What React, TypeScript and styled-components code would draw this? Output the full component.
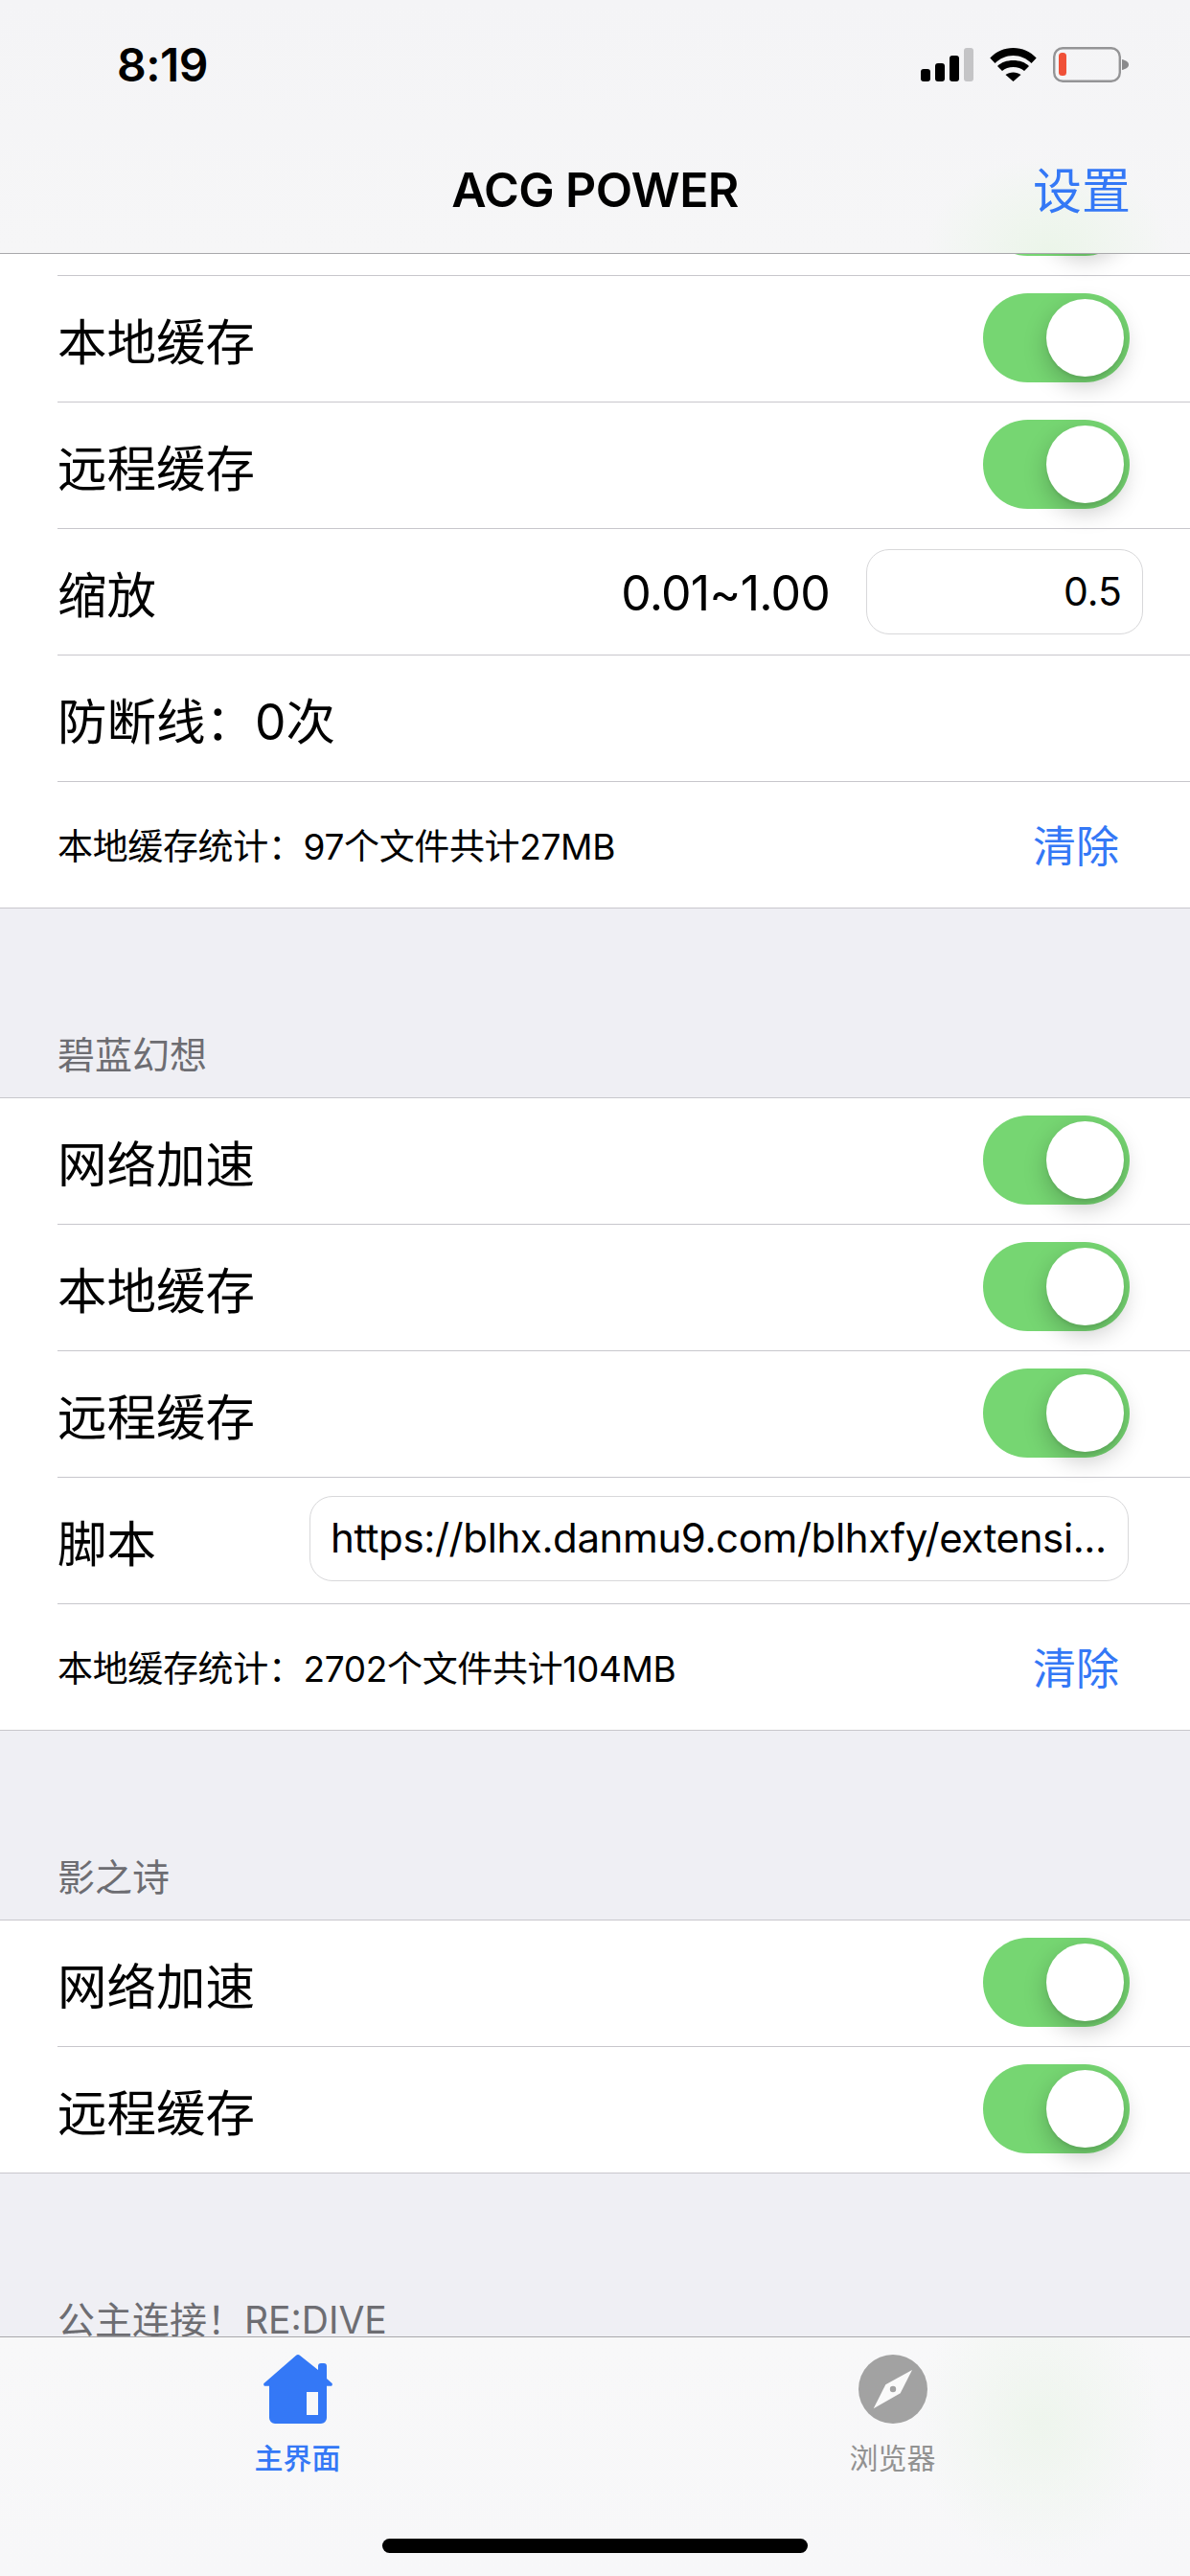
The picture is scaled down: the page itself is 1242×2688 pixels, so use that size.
import React from "react";
import styled, { createGlobalStyle } from "styled-components";

const BLUE = "#3478f6";
const LINE = "#c8c7cc";
const FONT = `Inter, "Noto Sans CJK SC", sans-serif`;

const GlobalStyle = createGlobalStyle`
  html, body {
    margin: 0;
    padding: 0;
    background: #efeff4;
  }
`;

const Screen = styled.div`
  position: relative;
  width: 1242px;
  height: 2688px;
  overflow: hidden;
  background: #efeff4;
  font-family: ${FONT};
  color: #000;
`;

const TopBar = styled.header`
  position: absolute;
  top: 0;
  left: 0;
  right: 0;
  z-index: 2;
  height: 265px;
  box-sizing: border-box;
  border-bottom: 1px solid #a9a9ac;
  background:
    radial-gradient(ellipse 130px 100px at 1095px 264px, #ebf5e9 0%, rgba(245, 245, 247, 0) 100%),
    linear-gradient(#f4f4f6, #f6f6f7);
`;

const StatusBar = styled.div`
  display: flex;
  align-items: center;
  justify-content: space-between;
  height: 135px;
  padding: 0 64px 0 122px;
`;

const Time = styled.span`
  font-size: 48px;
  font-weight: 600;
  letter-spacing: -0.5px;
`;

const StatusIcons = styled.div`
  display: flex;
  align-items: center;
  gap: 17px;
`;

const NavRow = styled.div`
  display: grid;
  grid-template-columns: 1fr auto 1fr;
  align-items: center;
  height: 129px;
  padding: 0 62px;
`;

const Title = styled.h1`
  grid-column: 2;
  margin: 0 0 4px;
  font-size: 50px;
  font-weight: 600;
  letter-spacing: -0.6px;
`;

const NavAction = styled.span`
  justify-self: end;
  margin-bottom: 8px;
  font-size: 51px;
  color: ${BLUE};
`;

const SectionHead = styled.div<{ $height: number }>`
  display: flex;
  align-items: flex-end;
  height: ${(p) => p.$height}px;
  box-sizing: border-box;
  padding: 0 0 21px 60px;
  font-size: 39px;
  line-height: 46px;
  color: #6d6d72;
`;

const Group = styled.section`
  background: #fff;
  border-top: 1px solid ${LINE};
`;

const Row = styled.div<{ $last?: boolean }>`
  display: flex;
  height: 132px;
  box-sizing: border-box;
  padding-left: ${(p) => (p.$last ? 0 : 60)}px;
  border-bottom: ${(p) => (p.$last ? `1px solid ${LINE}` : "none")};
`;

const RowInner = styled.div<{ $last?: boolean }>`
  flex: 1;
  display: flex;
  align-items: center;
  box-sizing: border-box;
  padding-left: ${(p) => (p.$last ? 60 : 0)}px;
  padding-bottom: 2px;
  border-bottom: ${(p) => (p.$last ? "none" : `1px solid ${LINE}`)};
`;

const Label = styled.span`
  padding-top: 9px;
  font-size: 51.5px;
  line-height: 60px;
`;

const Spacer = styled.div`
  flex: 1;
`;

const Track = styled.div`
  position: relative;
  width: 153px;
  height: 93px;
  margin-right: 63px;
  border-radius: 47px;
  background: #76d672;
`;

const Knob = styled.div`
  position: absolute;
  top: 6px;
  right: 6px;
  width: 81px;
  height: 81px;
  border-radius: 50%;
  background: #fff;
  box-shadow: 0 9px 24px rgba(0, 0, 0, 0.22), 0 3px 3px rgba(0, 0, 0, 0.06);
`;

const Range = styled.span`
  margin-right: 38px;
  padding-top: 5px;
  font-size: 50px;
  letter-spacing: -0.8px;
`;

const Field = styled.div<{ $width: number; $inset: number; $lift: number; $align: string; $size: number }>`
  display: flex;
  align-items: center;
  justify-content: ${(p) => p.$align};
  width: ${(p) => p.$width}px;
  height: 89px;
  box-sizing: border-box;
  margin: 0 ${(p) => p.$inset}px ${(p) => p.$lift}px 0;
  padding: 0 21px 2px;
  border: 1.5px solid #d8d8da;
  border-radius: 24px;
  font-size: ${(p) => p.$size}px;
  letter-spacing: ${(p) => (p.$size > 41 ? -0.4 : 0)}px;
  white-space: nowrap;
  overflow: hidden;
`;

const Stats = styled.span`
  font-size: 37px;
  letter-spacing: -0.35px;
`;

const ClearButton = styled.span`
  margin-right: 74px;
  font-size: 45px;
  color: ${BLUE};
`;

const TabBar = styled.nav`
  position: absolute;
  top: 2438px;
  left: 0;
  right: 0;
  z-index: 2;
  height: 250px;
  box-sizing: border-box;
  border-top: 1px solid #a9a9ac;
  background:
    radial-gradient(ellipse 130px 150px at 1085px 90px, #eef5ed 0%, rgba(248, 248, 249, 0) 100%),
    linear-gradient(#f8f8f9, #f7f7f9);
`;

const TabGrid = styled.div`
  display: grid;
  grid-template-columns: 1fr 1fr;
  padding-top: 18px;
`;

const Tab = styled.div<{ $active?: boolean }>`
  display: flex;
  flex-direction: column;
  align-items: center;
  gap: 18px;
  font-size: 30px;
  line-height: 36px;
  font-weight: ${(p) => (p.$active ? 500 : 400)};
  color: ${(p) => (p.$active ? BLUE : "#929292")};
`;

const HomeIndicator = styled.div`
  position: absolute;
  left: 399px;
  bottom: 24px;
  width: 444px;
  height: 15px;
  border-radius: 8px;
  background: #000;
`;

const Signal = () => (
  <svg width="55" height="35" viewBox="0 0 55 35">
    <rect x="0" y="22" width="10" height="13" rx="3" fill="#000" />
    <rect x="15" y="16" width="10" height="19" rx="3" fill="#000" />
    <rect x="30" y="8" width="10" height="27" rx="3" fill="#000" />
    <rect x="45" y="0" width="10" height="35" rx="3" fill="#c4c4c6" />
  </svg>
);

const Wifi = () => (
  <svg width="49" height="35" viewBox="0 0 49 35">
    <path d="M.3 10.5C6.5 4 15 0 24.5 0S42.5 4 48.7 10.5L43.5 16C38.5 11 32 8 24.5 8S10.5 11 5.5 16Z" fill="#000" />
    <path d="M8 19C12 15 18 13 24.5 13S37 15 41 19L36 24C33 21.5 29 20 24.5 20S16 21.5 13 24Z" fill="#000" />
    <path d="M16.5 28C18.5 26.5 21.5 25.5 24.5 25.5S30.5 26.5 32.5 28L24.5 35Z" fill="#000" />
  </svg>
);

const Battery = () => (
  <svg width="79" height="37" viewBox="0 0 79 37">
    <rect x="1.2" y="1.2" width="68.6" height="34.6" rx="9" fill="none" stroke="#949496" strokeWidth="2.4" />
    <rect x="6" y="6" width="8" height="24" rx="3.5" fill="#f05138" />
    <path d="M72 13c3 .6 7 2.2 7 5.5S75 23.400 72 24Z" fill="#8a8a8c" />
  </svg>
);

const HomeIcon = () => (
  <svg width="72" height="72" viewBox="0 0 72 72">
    <path
      fill={BLUE}
      fillRule="evenodd"
      d="M33.800.9a3.500 3.500 0 0 1 4.400 0L57 16V12a3 3 0 0 1 3-3h3a3 3 0 0 1 3 3V25L71 29.500A1.800 1.800 0 0 1 69.800 32.800H66V66a6 6 0 0 1-6 6H12a6 6 0 0 1-6-6V32.800H2.200A1.800 1.800 0 0 1 1 29.500ZM45 39V63H57V39Z"
    />
  </svg>
);

const CompassIcon = () => (
  <svg width="72" height="72" viewBox="0 0 72 72">
    <circle cx="36" cy="36" r="36" fill="#a2a2a2" />
    <path d="M56 16 28.300 31.300 15.700 56.300 43.700 40.300Z" fill="#fafafa" />
    <circle cx="36" cy="36" r="3.200" fill="#a2a2a2" />
  </svg>
);

// the first row sits behind the nav bar: only the foot of its toggle shows
const ToggleRow = ({ label, last }: { label?: string; last?: boolean }) => (
  <Row $last={last}>
    <RowInner $last={last}>
      {label && <Label>{label}</Label>}
      <Spacer />
      <Track>
        <Knob />
      </Track>
    </RowInner>
  </Row>
);

const StatsRow = ({ text }: { text: string }) => (
  <Row $last>
    <RowInner $last>
      <Stats>{text}</Stats>
      <Spacer />
      <ClearButton>清除</ClearButton>
    </RowInner>
  </Row>
);

export default function App() {
  return (
    <Screen>
      <GlobalStyle />
      <TopBar>
        <StatusBar>
          <Time>8:19</Time>
          <StatusIcons>
            <Signal />
            <Wifi />
            <Battery />
          </StatusIcons>
        </StatusBar>
        <NavRow>
          <Title>ACG POWER</Title>
          <NavAction>设置</NavAction>
        </NavRow>
      </TopBar>

      <SectionHead $height={155} />
      <Group>
        <ToggleRow />
        <ToggleRow label="本地缓存" />
        <ToggleRow label="远程缓存" />
        <Row>
          <RowInner>
            <Label>缩放</Label>
            <Spacer />
            <Range>0.01~1.00</Range>
            <Field $width={289} $inset={49} $lift={-2} $align="flex-end" $size={41}>
              0.5
            </Field>
          </RowInner>
        </Row>
        <Row>
          <RowInner>
            <Label>防断线：0次</Label>
          </RowInner>
        </Row>
        <StatsRow text="本地缓存统计：97个文件共计27MB" />
      </Group>

      <SectionHead $height={197}>碧蓝幻想</SectionHead>
      <Group>
        <ToggleRow label="网络加速" />
        <ToggleRow label="本地缓存" />
        <ToggleRow label="远程缓存" />
        <Row>
          <RowInner>
            <Label>脚本</Label>
            <Spacer />
            <Field $width={855} $inset={64} $lift={3} $align="flex-start" $size={42}>
              https://blhx.danmu9.com/blhxfy/extensi...
            </Field>
          </RowInner>
        </Row>
        <StatsRow text="本地缓存统计：2702个文件共计104MB" />
      </Group>

      <SectionHead $height={197}>影之诗</SectionHead>
      <Group>
        <ToggleRow label="网络加速" />
        <ToggleRow label="远程缓存" last />
      </Group>

      <SectionHead $height={197}>公主连接！RE:DIVE</SectionHead>

      <TabBar>
        <TabGrid>
          <Tab $active>
            <HomeIcon />
            主界面
          </Tab>
          <Tab>
            <CompassIcon />
            浏览器
          </Tab>
        </TabGrid>
        <HomeIndicator />
      </TabBar>
    </Screen>
  );
}
